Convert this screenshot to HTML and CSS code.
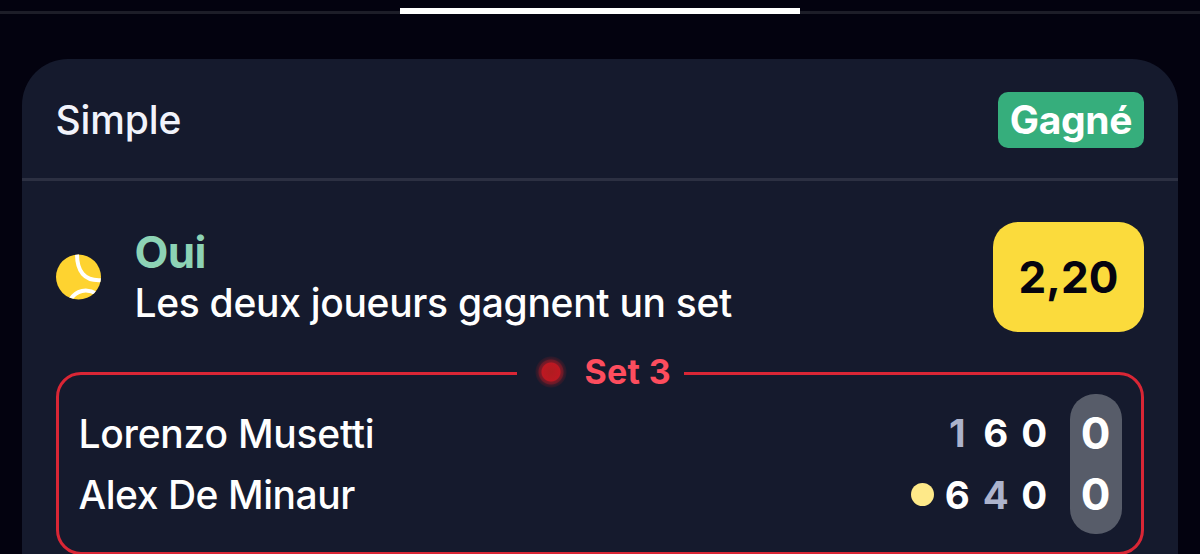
FILE: index.html
```html
<!DOCTYPE html>
<html lang="fr">
<head>
    <meta charset="UTF-8">
    <meta name="viewport" content="width=device-width, initial-scale=1.0">
    <title>Mes paris</title>
    <link rel="stylesheet" href="styles.css">
</head>
<body>
    <div class="tabs">
        <div class="tab-active"></div>
    </div>
    <div class="card">
        <div class="card-header">
            <span class="bet-type">Simple</span>
            <span class="badge">Gagné</span>
        </div>
        <div class="card-body">
            <div class="bet">
                <svg class="ball" viewBox="0 0 46 46">
                    <defs>
                        <clipPath id="ball-clip"><circle cx="22.5" cy="23" r="22.5"/></clipPath>
                    </defs>
                    <g clip-path="url(#ball-clip)">
                        <rect width="46" height="46" fill="#fed330"/>
                        <path d="M21 -2 C20.5 17 28 28 47 26" fill="none" stroke="#fff" stroke-width="4"/>
                        <path d="M14 46 C20 36 31 34 41 40" fill="none" stroke="#fff" stroke-width="4"/>
                    </g>
                </svg>
                <div class="bet-info">
                    <div class="bet-pick">Oui</div>
                    <div class="bet-label">Les deux joueurs gagnent un set</div>
                </div>
                <div class="odds">2,20</div>
            </div>
            <div class="scoreboard">
                <div class="live">
                    <span class="live-dot"></span>
                    <span class="live-text">Set 3</span>
                </div>
                <div class="players">
                    <div class="player">
                        <span class="name">Lorenzo Musetti</span>
                        <span class="set lost">1</span>
                        <span class="set">6</span>
                        <span class="set">0</span>
                    </div>
                    <div class="player">
                        <span class="name name-second">Alex De Minaur</span>
                        <span class="serve"></span>
                        <span class="set">6</span>
                        <span class="set lost">4</span>
                        <span class="set">0</span>
                    </div>
                </div>
                <div class="points">
                    <span>0</span>
                    <span>0</span>
                </div>
            </div>
        </div>
    </div>
</body>
</html>
```

FILE: styles.css
```css
* {
    box-sizing: border-box;
}

body {
    font-family: Inter, sans-serif;
    margin: 0;
    height: 554px;
    overflow: hidden;
    background-color: #03020f;
    color: #ffffff;
}

.tabs {
    display: flex;
    justify-content: center;
    align-items: flex-end;
    height: 14px;
    border-bottom: 3px solid #1d1d28;
}

.tab-active {
    width: 400px;
    height: 6px;
    margin-bottom: -3px;
    background-color: #ffffff;
}

.card {
    height: 495.5px;
    margin: 44.5px 22.5px 0 22px;
    overflow: hidden;
    background-color: #151a2d;
    border-radius: 46px 46px 0 0;
}

.card-header {
    display: flex;
    justify-content: space-between;
    align-items: center;
    height: 122.5px;
    padding: 0 33.5px;
    border-bottom: 3px solid #2c3042;
}

.bet-type {
    margin-top: 4px;
    font-size: 39px;
    font-weight: 500;
    line-height: 48px;
    letter-spacing: -0.1px;
    color: #f1f3fb;
}

.badge {
    display: flex;
    justify-content: center;
    align-items: center;
    width: 146px;
    height: 56px;
    margin-top: 3px;
    padding-bottom: 1px;
    border-radius: 10px;
    background-color: #36ae7c;
    font-size: 39px;
    font-weight: 700;
    letter-spacing: -0.3px;
}

.card-body {
    padding: 41px 33.5px 0;
}

.bet {
    display: flex;
    align-items: center;
    height: 110px;
}

.ball {
    width: 46px;
    height: 46px;
    margin-right: 33px;
}

.bet-info {
    flex: 1;
    white-space: nowrap;
}

.bet-pick {
    font-size: 44px;
    font-weight: 700;
    line-height: 51px;
    letter-spacing: -0.7px;
    color: #8dd3b5;
}

.bet-label {
    font-size: 39px;
    font-weight: 500;
    line-height: 50px;
    letter-spacing: -0.31px;
}

.odds {
    display: flex;
    justify-content: center;
    align-items: center;
    width: 151px;
    height: 110px;
    border-radius: 25px;
    background-color: #fbdb3c;
    color: #05040f;
    font-size: 44px;
    font-weight: 700;
}

.scoreboard {
    position: relative;
    display: flex;
    justify-content: space-between;
    align-items: center;
    height: 183px;
    margin-top: 39.5px;
    padding: 2px 19.5px 0 20px;
    border: 3px solid #d92635;
    border-radius: 25px;
}

/* sits on top of the scoreboard border */
.live {
    position: absolute;
    top: -25px;
    left: 458px;
    display: flex;
    align-items: center;
    width: 167px;
    height: 44px;
    padding-left: 18px;
    background-color: #151a2d;
}

.live-dot {
    width: 32px;
    height: 32px;
    margin-right: 18px;
    border-radius: 50%;
    background: radial-gradient(circle, #b01c20 0, #bd1822 9px, #7d1a27 10px, #6b1a28 12px, #3d1a2a 13px, #2a1a2b 15px, #151a2d 16px);
}

.live-text {
    font-size: 34px;
    font-weight: 700;
    letter-spacing: 0.3px;
    color: #fd4d5e;
    white-space: nowrap;
}

.players {
    flex: 1;
    margin-right: 16px;
}

.player {
    display: flex;
    align-items: center;
    height: 61.5px;
}

.name {
    flex: 1;
    font-size: 39px;
    font-weight: 500;
    letter-spacing: -0.25px;
}

.name-second {
    letter-spacing: -0.45px;
}

.set {
    width: 38.5px;
    text-align: center;
    font-size: 38.5px;
    font-weight: 700;
}

.lost {
    color: #acb3cc;
}

.serve {
    width: 23px;
    height: 23px;
    margin-right: 4px;
    border-radius: 50%;
    background-color: #fee989;
}

.points {
    display: flex;
    flex-direction: column;
    justify-content: center;
    width: 52px;
    height: 140px;
    border-radius: 25px;
    background-color: #575c69;
    font-size: 44px;
    font-weight: 700;
    line-height: 61.5px;
    text-align: center;
}
```
